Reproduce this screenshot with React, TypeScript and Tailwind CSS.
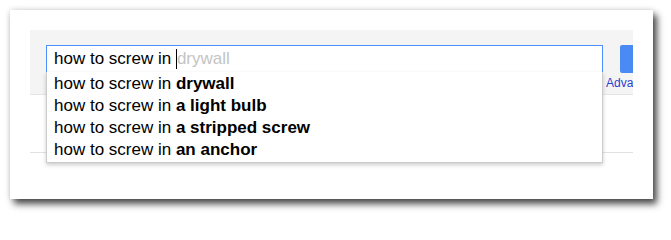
export default function App() {
  const items = ["drywall", "a light bulb", "a stripped screw", "an anchor"];

  return (
    <div className="h-[217px] w-[671px] bg-white pl-[10px] pt-[10px] font-['Liberation_Sans',Arial,sans-serif]">
      <div className="relative h-[189px] w-[643px] bg-white pl-[20px] pt-[20px] shadow-[4px_5px_7px_rgba(0,0,0,0.7),0_0_6px_rgba(0,0,0,0.15)]">
        <div className="relative h-[65px] w-[603px] overflow-hidden border-b border-[#e5e5e5] bg-[#f4f4f4]">
          <div className="flex pl-[16px] pt-[15px]">
            <div className="flex h-[28px] w-[557px] shrink-0 items-center border border-[#4d90fe] bg-white pl-[7px] text-[17px] text-black">
              <span className="whitespace-pre">how to screw in </span>
              <span className="h-[20px] w-px bg-black" />
              <span className="text-[#c4c4c4]">drywall</span>
            </div>
            <div className="ml-[17px] flex shrink-0 flex-col">
              <div className="h-[28px] w-[40px] rounded-[2px] bg-[#4a8af4]" />
              <span className="mt-[3px] -ml-[14px] text-[12px] leading-[14px] text-[#2b3fd0]">Advanced</span>
            </div>
          </div>
        </div>
        <div className="mt-[57px] h-px w-[603px] bg-[#e2e2e2]" />
        <ul className="absolute left-[36px] top-[62px] w-[557px] border border-t-0 border-[#cccccc] bg-white py-px shadow-[0_2px_4px_rgba(0,0,0,0.2)]">
          {items.map((item) => (
            <li key={item} className="h-[22px] pl-[7px] text-[17px] leading-[22px] text-black">
              how to screw in <b className="font-bold">{item}</b>
            </li>
          ))}
        </ul>
      </div>
    </div>
  );
}
